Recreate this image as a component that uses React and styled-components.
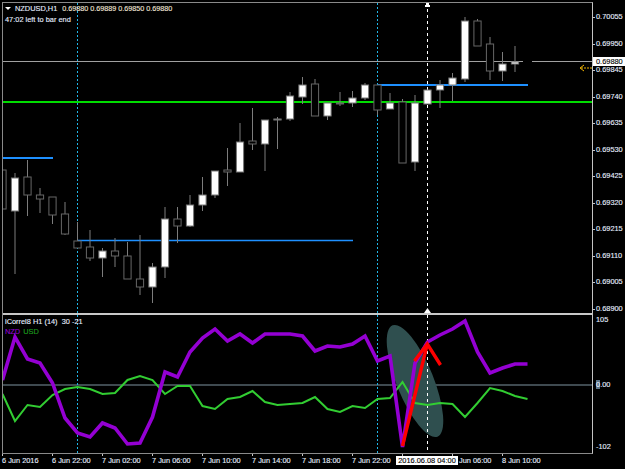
import React from 'react';
import styled, { createGlobalStyle } from 'styled-components';

const GlobalStyle = createGlobalStyle`
  html, body {
    margin: 0;
    padding: 0;
    background: #000;
    overflow: hidden;
  }
`;

const step = 12.5;
const xAt = (i) => 2.5 + step * i;

// wick top, wick bottom, body top, body bottom, white body
const candles = [
  [162, 209, 170, 209, 0], [173, 274, 178, 211, 1], [160, 216, 177, 195, 0], [188, 213, 195, 199, 0],
  [197, 224, 197, 215, 0], [202, 235, 214, 234, 0], [222, 248, 241, 248, 0], [230, 261, 247, 258, 0],
  [248, 277, 251, 258, 1], [238, 267, 251, 256, 0], [242, 279, 256, 279, 0], [235, 295, 279, 287, 0],
  [263, 303, 267, 287, 1], [207, 278, 219, 267, 1], [207, 243, 219, 226, 0], [195, 227, 205, 226, 1],
  [177, 211, 195, 205, 1], [171, 198, 171, 195, 1], [148, 186, 170, 172, 0], [123, 172, 142, 172, 1],
  [108, 150, 141, 144, 0], [120, 171, 120, 144, 1], [117, 149, 119, 120, 1], [92, 121, 96, 119, 1],
  [77, 104, 85, 97, 1], [79, 116, 84, 116, 0], [103, 120, 103, 116, 1], [92, 106, 103, 104, 0],
  [91, 107, 98, 103, 1], [83, 100, 85, 98, 1], [85, 115, 85, 110, 0], [93, 109, 103, 109, 1],
  [99, 163, 102, 163, 0], [95, 171, 103, 162, 1], [90, 104, 90, 104, 1], [80, 108, 85, 90, 1],
  [73, 101, 78, 85, 1], [17, 82, 21, 79, 1], [19, 46, 21, 46, 0], [37, 80, 44, 71, 0],
  [52, 81, 64, 71, 1], [46, 72, 62, 64, 1],
];

const purple = [
  380, 337, 359, 363, 383, 418, 433, 437, 423, 428, 444, 443, 417, 372, 377, 352, 338, 329, 341, 334, 343, 334,
  334, 334, 336, 351, 346, 347, 344, 336, 361, 356, 447, 363, 342, 335, 329, 321, 352, 373, 368, 364, 364,
];

const green = [
  394, 421, 405, 407, 395, 389, 387, 389, 394, 393, 380, 376, 380, 394, 386, 386, 406, 409, 399, 397, 391, 402,
  405, 404, 403, 397, 409, 412, 406, 408, 399, 398, 382, 403, 405, 403, 404, 417, 403, 388, 391, 396, 399,
];

const toPoints = (values) => values.map((y, i) => `${xAt(i)},${y}`).join(' ');

const prices = [
  '0.70055', '0.69950', '0.69845', '0.69740', '0.69635', '0.69530',
  '0.69425', '0.69320', '0.69215', '0.69110', '0.69005', '0.68900',
];

// the 8 Jun 02:00 label sits under the crosshair stamp, so only its tick shows
const times = [
  { text: '6 Jun 2016' }, { text: '6 Jun 22:00' }, { text: '7 Jun 02:00' }, { text: '7 Jun 06:00' },
  { text: '7 Jun 10:00' }, { text: '7 Jun 14:00' }, { text: '7 Jun 18:00' }, { text: '7 Jun 22:00' },
  { text: '' }, { text: 'Jun 06:00', indent: 7 }, { text: '8 Jun 10:00' },
];

const Candle = ({ i, data }) => {
  const [high, low, top, bottom, white] = data;
  const x = xAt(i);
  return (
    <g>
      <line x1={x} y1={high} x2={x} y2={low} stroke="#7c7c7c" strokeWidth="1" />
      <rect
        x={x - 3.6}
        y={top}
        width="7.2"
        height={Math.max(bottom - top, 1)}
        fill={white ? '#fff' : '#000'}
        stroke={white ? '#777' : '#666'}
        strokeWidth="1"
      />
    </g>
  );
};

const CrossLines = ({ y1, y2 }) => (
  <g>
    <line x1="77.5" y1={y1} x2="77.5" y2={y2} stroke="#1fb6e8" strokeDasharray="2 2" />
    <line x1="377.5" y1={y1} x2="377.5" y2={y2} stroke="#1fb6e8" strokeDasharray="2 2" />
    <line x1="427.5" y1={y1} x2="427.5" y2={y2} stroke="#fff" strokeDasharray="3 3" />
  </g>
);

const App = () => {
  return (
    <Page>
      <GlobalStyle />
      <ChartFrame>
        <MainPane>
          <PaneSvg viewBox="3 3 589 310">
            <CrossLines y1={3} y2={313} />
            <line x1="3" y1="61.5" x2="523" y2="61.5" stroke="#a0a0a0" />
            <line x1="532" y1="61.5" x2="592" y2="61.5" stroke="#a0a0a0" />
            <line x1="3" y1="102" x2="592" y2="102" stroke="#00dc00" strokeWidth="2" />
            <line x1="3" y1="158" x2="53" y2="158" stroke="#1e90ff" strokeWidth="2" />
            <line x1="77.5" y1="240.5" x2="353" y2="240.5" stroke="#1e90ff" strokeWidth="1.6" />
            <line x1="377.5" y1="85" x2="528" y2="85" stroke="#1e90ff" strokeWidth="2" />
            {candles.map((c, i) => (
              <Candle key={i} i={i} data={c} />
            ))}
            <path d="M584 65 L580 68 L584 71" fill="none" stroke="#f0b400" strokeWidth="1" />
            <line x1="581" y1="68" x2="592" y2="68" stroke="#f0b400" strokeDasharray="2 1" />
            <path d="M426 3 H429 V5 H430 V7 H425 V5 H426 Z" fill="#fff" />
            <path d="M427.5 308 L431 313 H424 Z" fill="#fff" />
          </PaneSvg>
          <Legend>
            <LegendRow>
              <DropMark />
              <span>NZDUSD,H1</span>
              <Quotes>0.69880 0.69889 0.69850 0.69880</Quotes>
            </LegendRow>
            <LegendRow>47:02 left to bar end</LegendRow>
          </Legend>
        </MainPane>
        <PaneDivider />
        <SubPane>
          <PaneSvg viewBox="3 315 589 138">
            <line x1="3" y1="385" x2="592" y2="385" stroke="#3f4a50" strokeWidth="2" />
            <ellipse cx="415" cy="381" rx="18.5" ry="60" fill="#2f4f4f" transform="rotate(-22 415 381)" />
            <CrossLines y1={315} y2={453} />
            <polyline points={toPoints(green)} fill="none" stroke="#32cd32" strokeWidth="2" />
            <polyline points={toPoints(purple)} fill="none" stroke="#9400d3" strokeWidth="3.6" />
            <path
              d="M402.5 446 L427.3 344 M414.5 361 L427.3 344 L440.5 365"
              fill="none"
              stroke="#ff0000"
              strokeWidth="3.4"
            />
          </PaneSvg>
          <IndicatorLegend>
            <LegendRow>iCorrel8 H1 (14)&nbsp; 30 -21</LegendRow>
            <LegendRow>
              <SeriesName $color="#9400d3">NZD</SeriesName>
              <SeriesName $color="#1e9e1e">USD</SeriesName>
            </LegendRow>
          </IndicatorLegend>
        </SubPane>
      </ChartFrame>

      <PriceAxis>
        <PriceScale>
          {prices.map((p) => (
            <PriceLabel key={p}>{p}</PriceLabel>
          ))}
          <BidTag>0.69880</BidTag>
        </PriceScale>
        <SubScale>
          <SubLabel>105</SubLabel>
          <SubLabel $gap={57}>
            <ZeroMark>0</ZeroMark>.00
          </SubLabel>
          <SubLabel $gap={54}>-102</SubLabel>
        </SubScale>
      </PriceAxis>

      <TimeAxis>
        {times.map((t, i) => (
          <TimeLabel key={i} $indent={t.indent}>
            {t.text}
          </TimeLabel>
        ))}
        <TimeStamp>2016.06.08 04:00</TimeStamp>
      </TimeAxis>
    </Page>
  );
};
export default App;

const Page = styled.div`
  position: relative;
  width: 625px;
  height: 469px;
  padding: 2px 0 0 2px;
  box-sizing: border-box;
  background: #000;
  display: grid;
  grid-template-columns: 591px 32px;
  grid-template-rows: 452px 15px;
  font-family: 'Liberation Sans', Arial, sans-serif;
  font-size: 7.4px;
  color: #e6eeff;
  -webkit-text-stroke: 0.12px currentColor;
  overflow: hidden;
`;

const ChartFrame = styled.div`
  display: flex;
  flex-direction: column;
  border-top: 1px solid #8a8a8a;
  border-left: 1px solid #8a8a8a;
  border-right: 1px solid #c4c4c4;
  border-bottom: 1px solid #8a8a8a;
`;

const MainPane = styled.div`
  position: relative;
  height: 310px;
`;

const PaneDivider = styled.div`
  height: 2px;
  background: #c8c8c8;
`;

const SubPane = styled.div`
  position: relative;
  height: 138px;
`;

const PaneSvg = styled.svg`
  display: block;
  width: 100%;
  height: 100%;
`;

const Legend = styled.div`
  position: absolute;
  top: 0;
  left: 2px;
  display: flex;
  flex-direction: column;
  gap: 1px;
  padding-top: 1px;
`;

const IndicatorLegend = styled(Legend)`
  padding-top: 1.5px;
`;

const LegendRow = styled.div`
  display: flex;
  align-items: center;
  gap: 3px;
  height: 9.5px;
  white-space: nowrap;
`;

const DropMark = styled.i`
  width: 0;
  height: 0;
  margin: 0 1px 0 0;
  border-left: 3px solid transparent;
  border-right: 3px solid transparent;
  border-top: 3px solid #fff;
`;

const Quotes = styled.span`
  margin-left: 2px;
  font-size: 7.2px;
  color: #f2e6d8;
`;

const SeriesName = styled.span`
  color: ${(props) => props.$color};
`;

const PriceAxis = styled.div`
  display: flex;
  flex-direction: column;
`;

const PriceScale = styled.div`
  position: relative;
  height: 311px;
  padding-top: 2px;
  box-sizing: border-box;
`;

const PriceLabel = styled.div`
  position: relative;
  height: 26.5px;
  line-height: 26.5px;
  padding-left: 3px;
  white-space: nowrap;

  &::before {
    content: '';
    position: absolute;
    left: 0;
    top: 13px;
    width: 2px;
    height: 1px;
    background: #c4c4c4;
  }
`;

const BidTag = styled.div`
  position: absolute;
  top: 55px;
  left: 0;
  right: -2px;
  height: 9px;
  line-height: 9px;
  padding-left: 3px;
  background: #fff;
  color: #000;
`;

const SubScale = styled.div`
  display: flex;
  flex-direction: column;
  padding-top: 3px;
`;

const SubLabel = styled.div`
  height: 8px;
  line-height: 8px;
  padding-left: 3px;
  margin-top: ${(props) => props.$gap || 0}px;
  white-space: nowrap;
`;

const ZeroMark = styled.span`
  background: #5c7488;
`;

const TimeAxis = styled.div`
  position: relative;
  grid-column: 1 / 3;
  display: flex;
`;

const TimeLabel = styled.div`
  position: relative;
  flex: 0 0 50px;
  box-sizing: border-box;
  padding: 2px 0 0 ${(props) => props.$indent || 0}px;
  line-height: 9px;
  white-space: nowrap;

  &::before {
    content: '';
    position: absolute;
    left: 0;
    top: 0;
    width: 1px;
    height: 2px;
    background: #c4c4c4;
  }
`;

const TimeStamp = styled.div`
  position: absolute;
  left: 394px;
  top: 2px;
  width: 62px;
  height: 9px;
  line-height: 9px;
  text-align: center;
  background: #fff;
  color: #000;
  white-space: nowrap;
`;
